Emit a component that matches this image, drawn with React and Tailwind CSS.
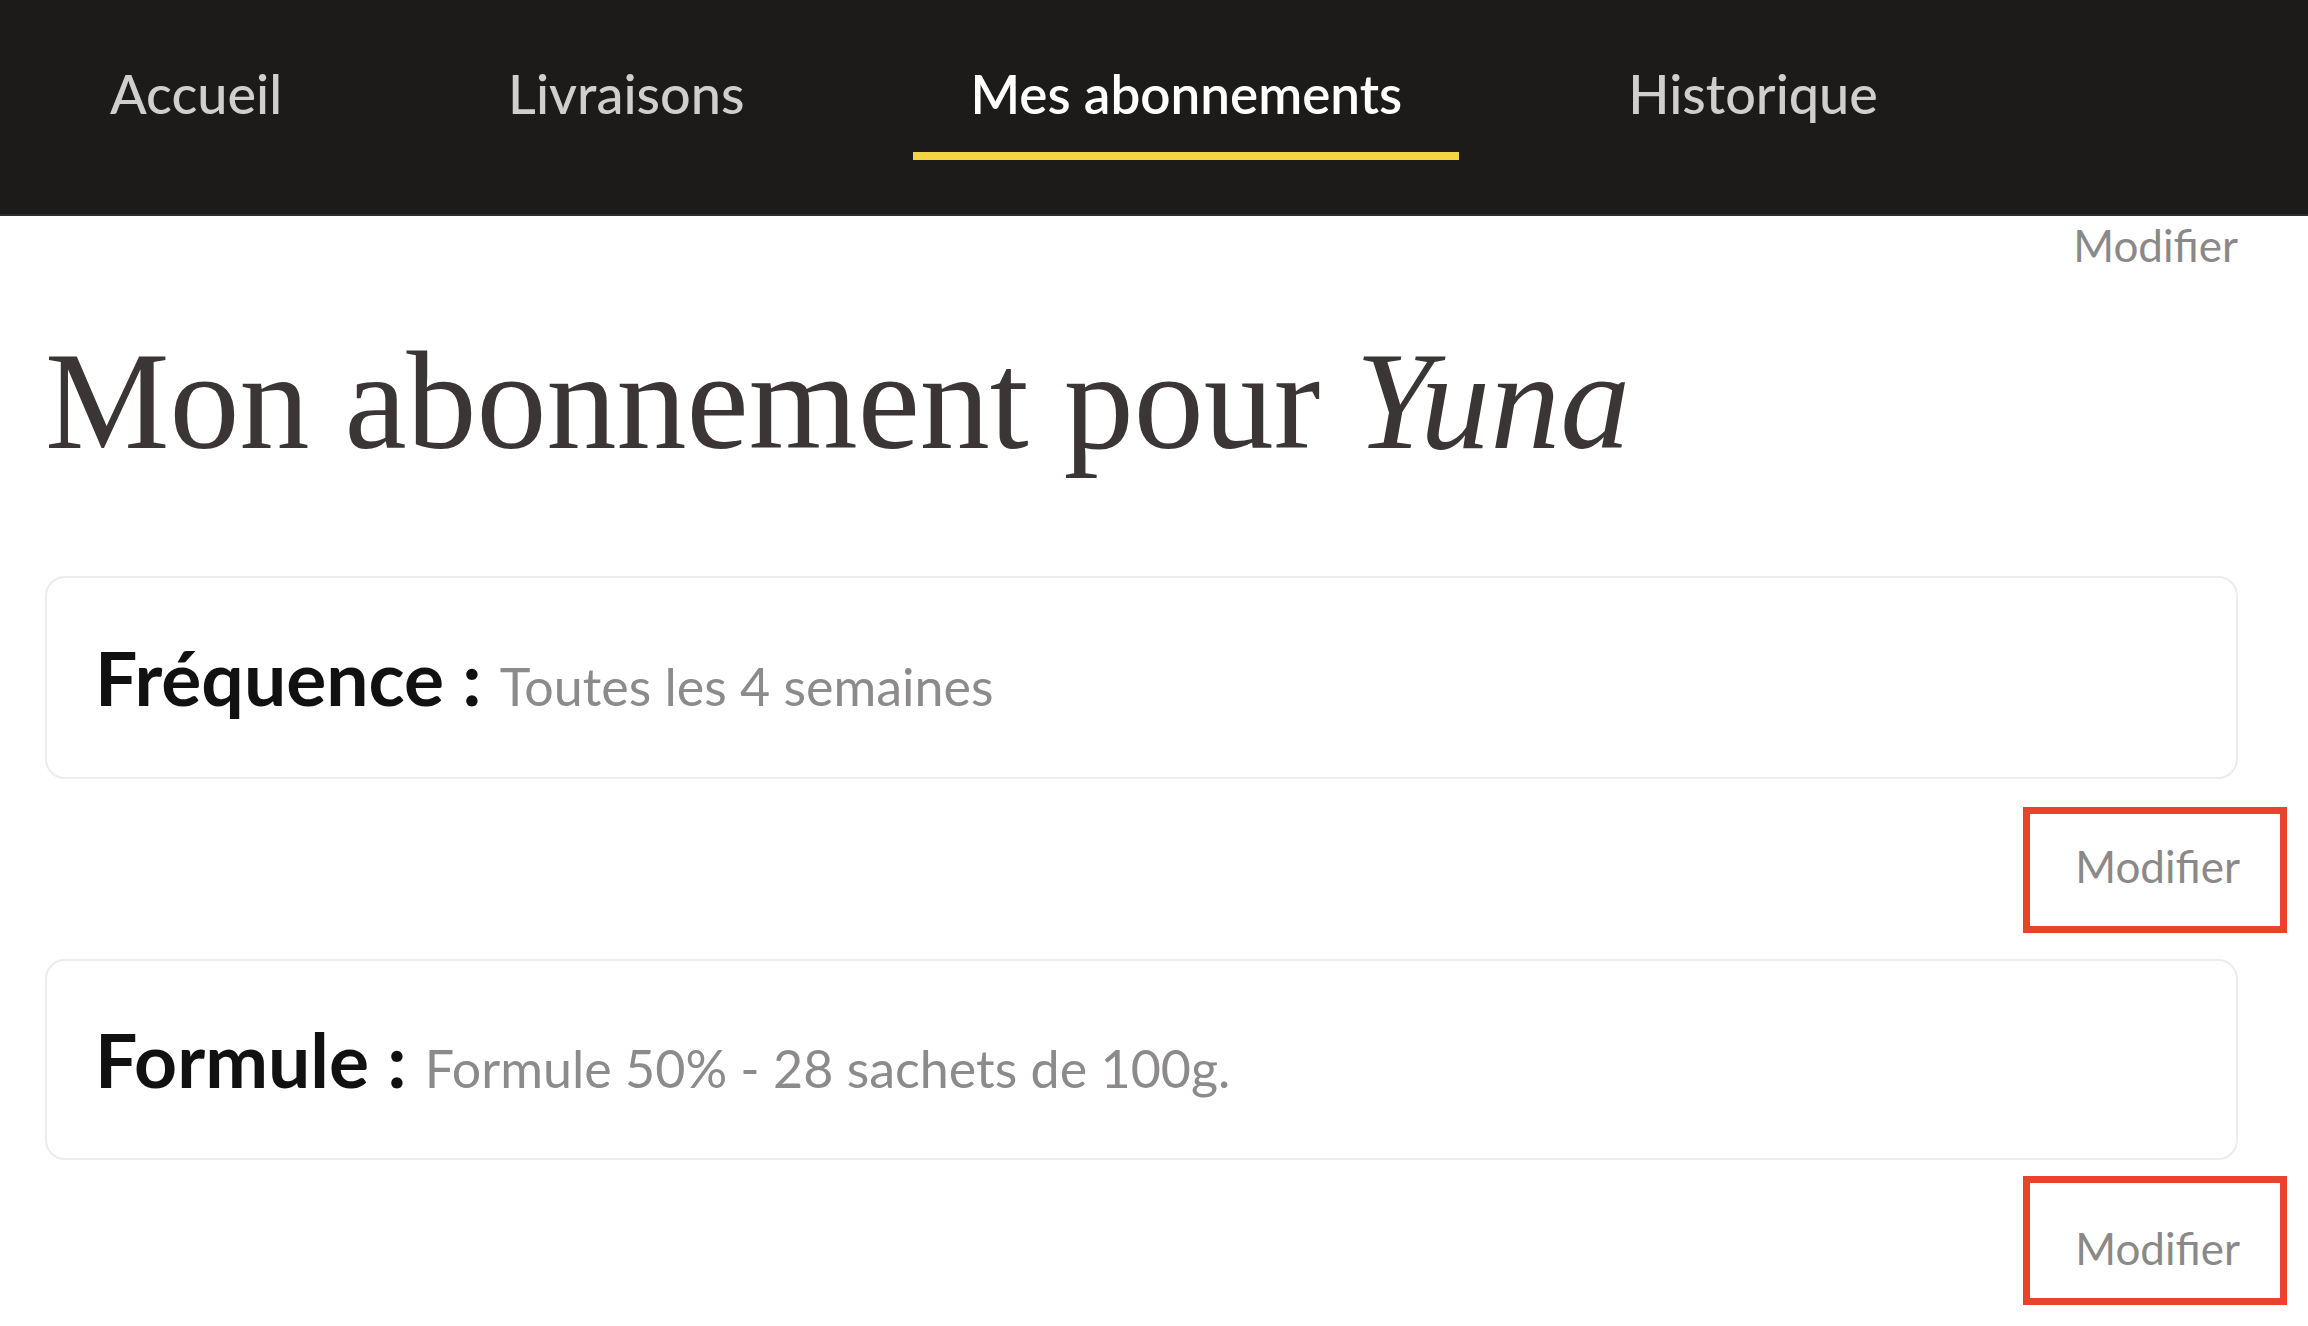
export default function App() {
  const tabs = [
    { label: "Accueil", active: false },
    { label: "Livraisons", active: false },
    { label: "Mes abonnements", active: true },
    { label: "Historique", active: false },
  ];

  return (
    <div className="min-h-screen bg-white font-['Lato','Noto_Sans',sans-serif]">
      {/* top nav */}
      <nav className="h-[216px] bg-[#1d1b1a] border-b-2 border-[#2f2d2c] flex items-start gap-[112px] pl-[53px]">
        {tabs.map((tab) => (
          <div key={tab.label} className="flex flex-col pt-[67px]">
            <span
              className={`px-[57px] leading-none whitespace-nowrap ${
                tab.active
                  ? "text-[53px] text-white font-semibold"
                  : "text-[54px] text-[#cfcfcf] font-medium"
              }`}
            >
              {tab.label}
            </span>
            {tab.active && <div className="mt-[32px] h-[8px] bg-[#f5d443]" />}
          </div>
        ))}
      </nav>

      <main className="pl-[45px] pr-[70px]">
        <div className="flex justify-end mt-[7px]">
          <span className="text-[44px] leading-none text-[#8a8888]">Modifier</span>
        </div>

        <h1 className="mt-[64px] font-['Liberation_Serif','Times_New_Roman',serif] text-[140px] leading-none text-[#3b3535] whitespace-nowrap">
          Mon abonnement pour <em>Yuna</em>
        </h1>

        <div className="mt-[105px] h-[203px] rounded-[20px] border-2 border-[#ececec] flex items-center pl-[48px]">
          <p className="leading-none whitespace-nowrap">
            <span className="text-[75px] font-bold text-[#111111]">Fréquence : </span>
            <span className="text-[52px] text-[#8c8a8a]">Toutes les 4 semaines</span>
          </p>
        </div>

        <div className="flex justify-end mt-[28px]">
          <button className="-mr-[49px] w-[264px] h-[126px] border-[7px] border-[#e8432b] flex justify-end items-start pt-[30px] pr-[40px]">
            <span className="text-[44px] leading-none text-[#8a8888]">Modifier</span>
          </button>
        </div>

        <div className="mt-[26px] h-[201px] rounded-[20px] border-2 border-[#ececec] flex items-center pl-[48px]">
          <p className="leading-none whitespace-nowrap">
            <span className="text-[75px] font-bold text-[#111111]">Formule : </span>
            <span className="text-[52px] text-[#8c8a8a]">Formule 50% - 28 sachets de 100g.</span>
          </p>
        </div>

        <div className="flex justify-end mt-[16px]">
          <button className="-mr-[49px] w-[264px] h-[129px] border-[7px] border-[#e8432b] flex justify-end items-start pt-[43px] pr-[40px]">
            <span className="text-[44px] leading-none text-[#8a8888]">Modifier</span>
          </button>
        </div>
      </main>
    </div>
  );
}
